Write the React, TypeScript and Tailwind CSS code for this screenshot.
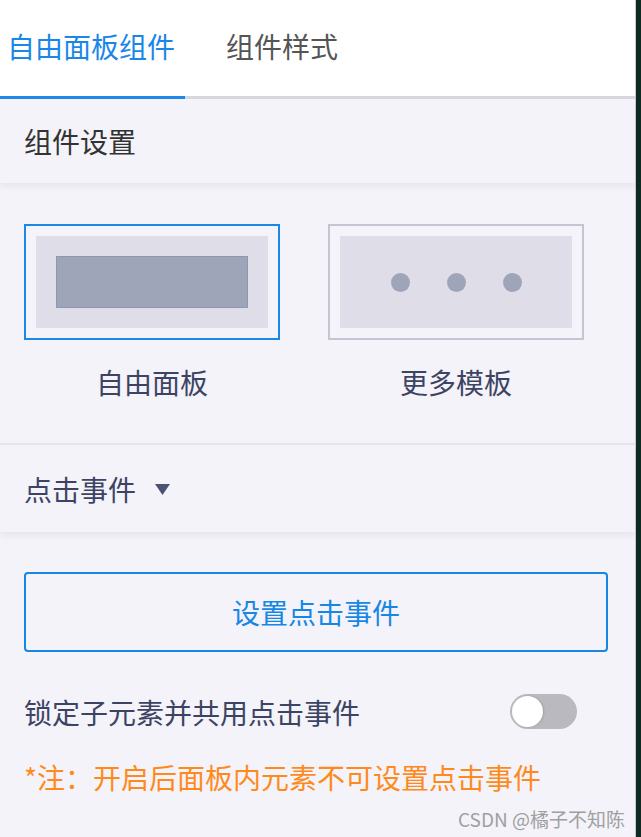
const FONT = "font-['Noto_Sans_CJK_SC','Noto_Sans',sans-serif]";

function Tabs() {
  return (
    <div className="flex h-[99px] shrink-0 bg-white border-b-[3px] border-[#d7d7de]">
      <div className="w-[185px] h-[99px] -mb-[3px] pl-[7px] flex items-center border-b-[3px] border-[#1e88e8]">
        <span className="text-[28px] leading-none text-[#1a86e8] -mt-[4px]">自由面板组件</span>
      </div>
      <div className="ml-[41px] flex items-center">
        <span className="text-[28px] leading-none text-[#555555] -mt-[4px]">组件样式</span>
      </div>
    </div>
  );
}

function Card(props: { active?: boolean; label: string; children: React.ReactNode }) {
  return (
    <div className="flex flex-col items-center w-[256px]">
      <div
        className={`w-[256px] h-[116px] p-[10px] border-2 ${
          props.active ? "border-[#1b88e8]" : "border-[#c6c4d3]"
        }`}
      >
        <div className="w-full h-full bg-[#dedde8] flex items-center justify-center">
          {props.children}
        </div>
      </div>
      <span className="mt-[28px] text-[28px] leading-none text-[#3d4463]">{props.label}</span>
    </div>
  );
}

function Toggle() {
  return (
    <div className="w-[67px] h-[35px] rounded-full bg-[#b9b9bf] flex items-center px-[2px]">
      <div className="w-[31px] h-[31px] rounded-full bg-white shadow-[1px_0_2px_rgba(0,0,0,0.15)]" />
    </div>
  );
}

export default function App() {
  return (
    <div className={`w-[641px] h-[837px] flex bg-[#0e2a22] ${FONT}`}>
      <div className="relative w-[636px] h-full border-r border-[#c9c9ce] bg-[#f4f3f9] flex flex-col">
        <Tabs />

        <div className="h-[84px] shrink-0 flex items-center px-[24px] shadow-[0_4px_6px_rgba(40,40,80,0.06)]">
          <span className="text-[28px] leading-none text-[#333333]">组件设置</span>
        </div>

        <div className="pt-[41px] pb-[47px] px-[24px] flex gap-[48px] border-b-2 border-[#e6e5ed]">
          <Card active label="自由面板">
            <div className="w-[192px] h-[52px] bg-[#9fa5b9] border border-[#9096ad]" />
          </Card>
          <Card label="更多模板">
            <div className="flex gap-[37px]">
              <div className="w-[19px] h-[19px] rounded-full bg-[#9fa5b9]" />
              <div className="w-[19px] h-[19px] rounded-full bg-[#9fa5b9]" />
              <div className="w-[19px] h-[19px] rounded-full bg-[#9fa5b9]" />
            </div>
          </Card>
        </div>

        <div className="h-[87px] shrink-0 flex items-center px-[24px] shadow-[0_4px_6px_rgba(40,40,80,0.06)]">
          <span className="text-[28px] leading-none text-[#3d4463]">点击事件</span>
          <svg className="ml-[19px] mt-[2px]" width="15" height="11" viewBox="0 0 15 11">
            <path d="M0 0 H15 L7.5 11 Z" fill="#4b5273" />
          </svg>
        </div>

        <div className="px-[24px] flex flex-col">
          <button className="mt-[40px] w-[584px] h-[80px] border-2 border-[#1787e6] rounded-[4px] flex items-center justify-center">
            <span className="text-[28px] leading-none text-[#1787e6]">设置点击事件</span>
          </button>

          <div className="mt-[42px] flex items-center justify-between pr-[34px]">
            <span className="text-[28px] leading-none text-[#3d4463]">锁定子元素并共用点击事件</span>
            <Toggle />
          </div>

          <div className="mt-[34px] text-[28px] leading-none text-[#ff8a1c]">
            *注：开启后面板内元素不可设置点击事件
          </div>
        </div>

        <span className="absolute right-[10px] bottom-[9px] text-[19px] leading-none text-[#a0a0a0]">
          CSDN @橘子不知陈
        </span>
      </div>
    </div>
  );
}
